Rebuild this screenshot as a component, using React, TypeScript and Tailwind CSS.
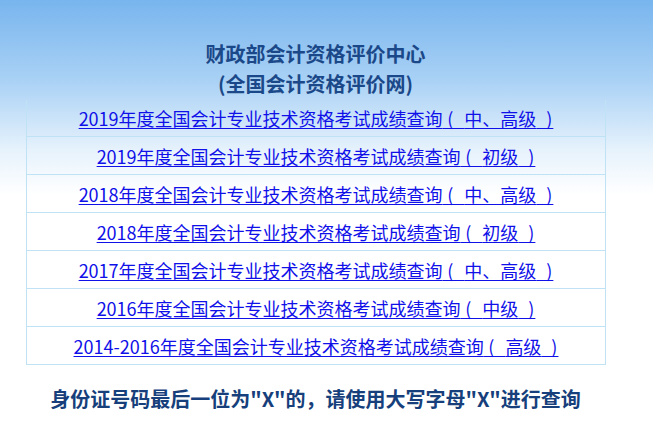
import React from "react";

const links: [string, string][] = [
  ["2019年度全国会计专业技术资格考试成绩查询", "中、高级"],
  ["2019年度全国会计专业技术资格考试成绩查询", "初级"],
  ["2018年度全国会计专业技术资格考试成绩查询", "中、高级"],
  ["2018年度全国会计专业技术资格考试成绩查询", "初级"],
  ["2017年度全国会计专业技术资格考试成绩查询", "中、高级"],
  ["2016年度全国会计专业技术资格考试成绩查询", "中级"],
  ["2014-2016年度全国会计专业技术资格考试成绩查询", "高级"],
];

export default function App() {
  return (
    <div
      className="w-[653px] h-[432px] overflow-hidden bg-[linear-gradient(180deg,#78b5ee_0px,#a9d1f5_80px,#e6f2fc_150px,#ffffff_195px)]"
      style={{ fontFamily: '"Noto Sans CJK SC", "Noto Sans", sans-serif' }}
    >
      <div className="w-[631px]">
        <div className="pt-[39px] flex flex-col items-center text-[20px] leading-[30px] font-bold text-[#1b4888]">
          <div>财政部会计资格评价中心</div>
          <div>(全国会计资格评价网)</div>
        </div>
        <div className="ml-[26px] w-[580px] border-l border-r border-[#bfe2f4]">
          {links.map(([t, g], i) => (
            <div
              key={i}
              className={`flex items-center justify-center border-b border-[#bfe2f4] ${i === 0 ? "h-[37px] mt-[1px]" : "h-[38px]"}`}
            >
              <a
                href="#"
                className="text-[18px] leading-[24px] text-[#1010e8] underline underline-offset-[2px] whitespace-pre [text-decoration-skip-ink:none]"
              >
                {t}
                <span className="tracking-[1px]">{"\u2009(\u2002"}</span>
                {g}
                <span className="tracking-[1px]">{"\u2002)"}</span>
              </a>
            </div>
          ))}
        </div>
        <div className="mt-[20px] text-center text-[20px] leading-[28px] font-bold text-[#163f7c]">
          身份证号码最后一位为"X"的，请使用大写字母"X"进行查询
        </div>
      </div>
    </div>
  );
}
